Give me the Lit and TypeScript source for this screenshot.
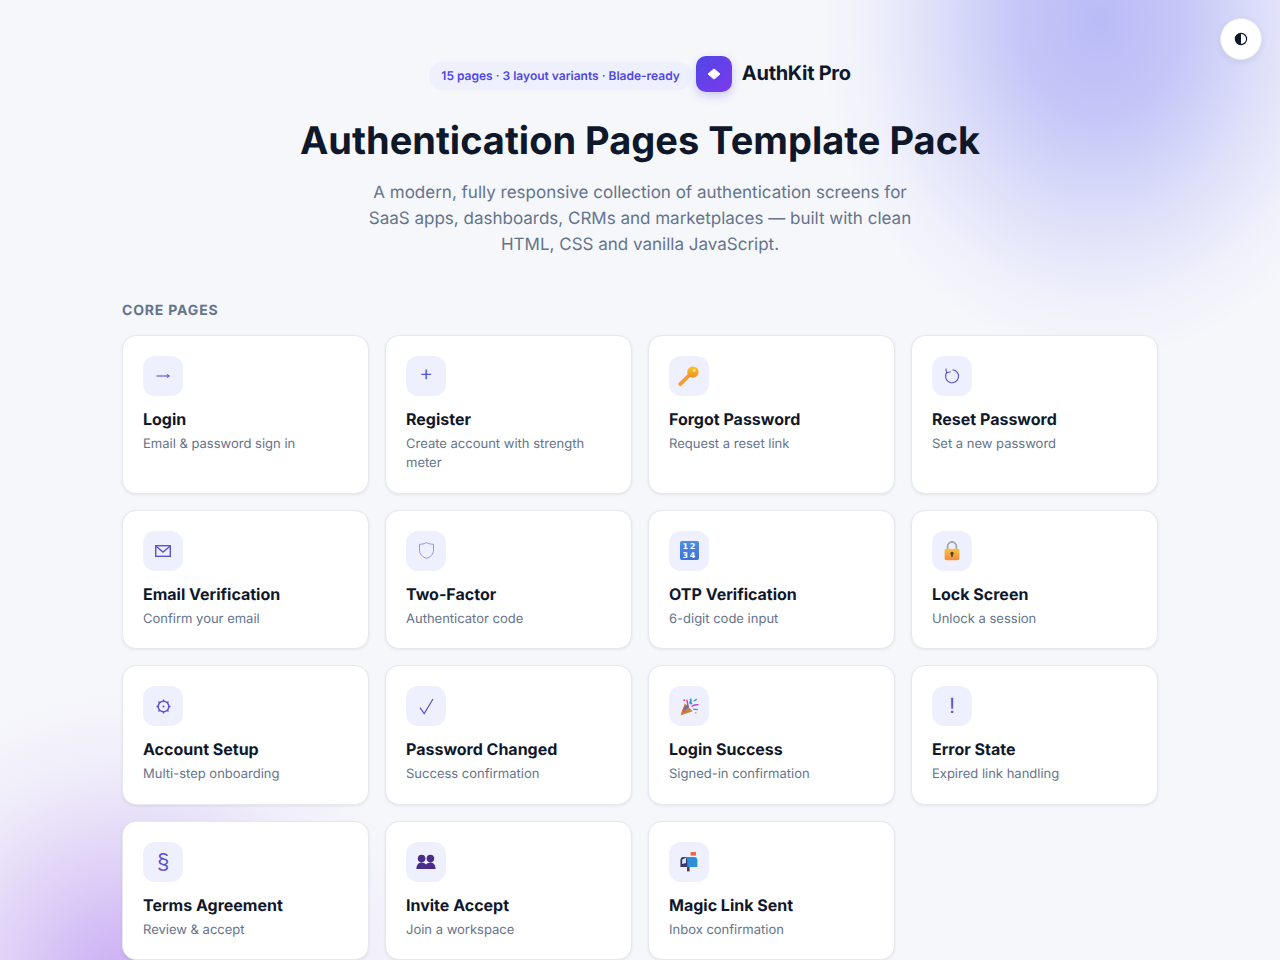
import { LitElement, html, css, svg } from "lit";
import { customElement } from "lit/decorators.js";

interface PageCard {
  icon: unknown;
  title: string;
  desc: string;
}

const arrowIcon = svg`
  <svg width="14" height="8" viewBox="0 0 14 8" fill="none" stroke="currentColor" stroke-width="1.1">
    <path d="M.5 4H13" />
    <path d="M11 2.4 13.2 4 11 5.6" />
  </svg>`;

const resetIcon = svg`
  <svg width="18" height="18" viewBox="0 0 16 16" fill="none" stroke="currentColor" stroke-width="1">
    <path d="M8.4 2.4A5.8 5.8 0 1 1 3.2 5" />
    <path d="M2.6 1.4 3.2 5.2 6.8 4.2" />
  </svg>`;

const mailIcon = svg`
  <svg width="16" height="12" viewBox="0 0 16 12" fill="none" stroke="currentColor" stroke-width="1.4">
    <rect x=".7" y=".7" width="14.6" height="10.6" />
    <path d="M1 1.2 8 7l7-5.8" />
  </svg>`;

const gearIcon = svg`
  <svg width="17" height="17" viewBox="0 0 16 16" fill="none" stroke="currentColor">
    <circle cx="8" cy="8" r="5" stroke-width="1.4" />
    <circle cx="8" cy="8" r="1" fill="currentColor" stroke="none" />
    <path d="M8 1.4V3M8 13v1.6M1.4 8H3M13 8h1.6M3.3 3.3l1.1 1.1M11.6 11.6l1.1 1.1M12.7 3.3l-1.1 1.1M4.4 11.6l-1.1 1.1"
      stroke-width="1.3" />
  </svg>`;

const checkIcon = svg`
  <svg width="15" height="17" viewBox="0 0 15 17" fill="none" stroke="currentColor" stroke-width="1.2">
    <path d="M1 9.6 5.2 15.6 14 1" />
  </svg>`;

// emoji in the design are drawn here so they don't depend on the installed emoji font
const keyIcon = svg`
  <svg width="24" height="24" viewBox="0 0 22 22">
    <defs>
      <linearGradient id="key" x1="0" y1="0" x2="0" y2="1">
        <stop offset="0" stop-color="#fcc419" /><stop offset="1" stop-color="#f08c2e" />
      </linearGradient>
    </defs>
    <path d="M3 18.5 11 10.5" stroke="#f39a32" stroke-width="3.4" stroke-linecap="round" />
    <circle cx="14.6" cy="7.4" r="5.2" fill="url(#key)" />
    <circle cx="15.8" cy="5.8" r="1.5" fill="#ffe27a" />
  </svg>`;

const shieldIcon = svg`
  <svg width="21" height="21" viewBox="0 0 18 18">
    <path d="M9 2.2c2 1.1 4 1.5 6 1.5v5c0 3.4-2.4 5.8-6 7-3.6-1.2-6-3.6-6-7v-5c2 0 4-.4 6-1.5Z"
      fill="none" stroke="#8f8cdc" stroke-width="0.8" />
  </svg>`;

const lockIcon = svg`
  <svg width="18" height="22" viewBox="0 0 18 22">
    <defs>
      <linearGradient id="lock" x1="0" y1="0" x2="0" y2="1">
        <stop offset="0" stop-color="#f9c23c" /><stop offset="1" stop-color="#f58a3c" />
      </linearGradient>
    </defs>
    <path d="M4.6 10V6.4a4.4 4.4 0 0 1 8.8 0V10" fill="none" stroke="#a3a6b5" stroke-width="1.8" />
    <rect x="1.6" y="8.8" width="14.8" height="11.4" rx="1.8" fill="url(#lock)" />
    <circle cx="9" cy="13.4" r="1.6" fill="#4a3a2c" />
    <rect x="8.3" y="13.6" width="1.4" height="3.4" fill="#4a3a2c" />
  </svg>`;

const partyIcon = svg`
  <svg width="21" height="21" viewBox="0 0 20 20">
    <path d="M1.5 18.5 5.5 7l7.5 7.5Z" fill="#c08a3e" />
    <path d="M3.6 12.5 8 7.8l2 2-5.8 5.2Z" fill="#7a6a9c" />
    <path d="M2.4 16 4 11.5l3 3.4Z" fill="#e0557d" />
    <path d="M7.5 3.5 8.5 9" stroke="#e8408c" stroke-width="1.4" />
    <path d="M10 6.5c1.6-.8 1.6-2.2 1-4" fill="none" stroke="#2e9bd6" stroke-width="1.6" />
    <circle cx="11.4" cy="7" r="1.2" fill="#2e9bd6" />
    <path d="M12 10c2-1.8 4-2 6.5-1.6" fill="none" stroke="#c145c9" stroke-width="1.4" />
    <path d="M13.5 12.5 18 13" stroke="#2e9bd6" stroke-width="1.2" />
    <path d="M14 5l3-2" stroke="#2e9bd6" stroke-width="1.3" />
    <circle cx="5" cy="4" r="0.9" fill="#e8408c" />
    <circle cx="16" cy="16" r="0.8" fill="#e8a13c" />
  </svg>`;

const peopleIcon = svg`
  <svg width="20" height="16" viewBox="0 0 20 16" fill="#4a2c8a">
    <circle cx="5.6" cy="4.6" r="3.8" />
    <circle cx="14.4" cy="4.6" r="3.8" />
    <path d="M.4 15c0-4 2-6.6 5.2-6.6 1.8 0 3.3.8 4.4 2 1.1-1.2 2.6-2 4.4-2 3.2 0 5.2 2.6 5.2 6.6Z" />
  </svg>`;

const mailboxIcon = svg`
  <svg width="20" height="22" viewBox="0 0 20 22">
    <rect x="11.6" y="1" width="5.4" height="3.6" fill="#e8674a" />
    <path d="M5 6h10a3.4 3.4 0 0 1 3.4 3.4V16H8Z" fill="#2e8fd6" />
    <path d="M1.4 9.4A3.4 3.4 0 0 1 4.8 6 3.4 3.4 0 0 1 8.2 9.4V16H1.4Z" fill="#39376e" />
    <path d="M3.2 8.4 7 6.8V12L3.2 13Z" fill="#e3e6f5" />
    <rect x="8" y="16" width="2.6" height="4.4" fill="#5a3a3a" />
  </svg>`;

const corePages: PageCard[] = [
  { icon: arrowIcon, title: "Login", desc: "Email & password sign in" },
  { icon: "+", title: "Register", desc: "Create account with strength meter" },
  { icon: keyIcon, title: "Forgot Password", desc: "Request a reset link" },
  { icon: resetIcon, title: "Reset Password", desc: "Set a new password" },
  { icon: mailIcon, title: "Email Verification", desc: "Confirm your email" },
  { icon: shieldIcon, title: "Two-Factor", desc: "Authenticator code" },
  { icon: html`<span class="num-tile"><span>12</span><span>34</span></span>`, title: "OTP Verification", desc: "6-digit code input" },
  { icon: lockIcon, title: "Lock Screen", desc: "Unlock a session" },
  { icon: gearIcon, title: "Account Setup", desc: "Multi-step onboarding" },
  { icon: checkIcon, title: "Password Changed", desc: "Success confirmation" },
  { icon: partyIcon, title: "Login Success", desc: "Signed-in confirmation" },
  { icon: html`<span class="glyph-lg">!</span>`, title: "Error State", desc: "Expired link handling" },
  { icon: html`<span class="glyph-lg">§</span>`, title: "Terms Agreement", desc: "Review & accept" },
  { icon: peopleIcon, title: "Invite Accept", desc: "Join a workspace" },
  { icon: mailboxIcon, title: "Magic Link Sent", desc: "Inbox confirmation" },
];

@customElement("app-root")
export class AppRoot extends LitElement {
  static styles = css`
    :host {
      display: block;
      position: relative;
      height: 960px;
      overflow: hidden;
      background: #f6f7fb;
      font-family: Inter, "Noto Sans", sans-serif;
      color: #0f172a;
      text-rendering: geometricPrecision;
    }

    .glow-top {
      position: absolute;
      top: -320px;
      left: 820px;
      width: 560px;
      height: 680px;
      background: radial-gradient(closest-side, rgba(99, 102, 241, 0.41) 0%, rgba(99, 102, 241, 0.33) 30%, rgba(99, 102, 241, 0.17) 58%, rgba(99, 102, 241, 0.05) 82%, rgba(99, 102, 241, 0) 100%);
    }

    .glow-bottom {
      position: absolute;
      top: 690px;
      left: -170px;
      width: 600px;
      height: 600px;
      background: radial-gradient(closest-side, rgba(147, 82, 235, 0.45) 0%, rgba(147, 82, 235, 0.4) 13%, rgba(147, 82, 235, 0.21) 45%, rgba(147, 82, 235, 0.06) 75%, rgba(147, 82, 235, 0) 100%);
    }

    .theme-toggle {
      position: absolute;
      top: 18px;
      right: 18px;
      width: 42px;
      height: 42px;
      border-radius: 50%;
      background: #fff;
      border: 1px solid #e6e8f0;
      box-shadow: 0 2px 6px rgba(15, 23, 42, 0.08);
      display: flex;
      align-items: center;
      justify-content: center;
      box-sizing: border-box;
    }

    .wrap {
      position: relative;
      max-width: 1100px;
      margin: 0 auto;
      padding: 56px 32px 0;
      box-sizing: border-box;
    }

    .hero {
      text-align: center;
      margin-bottom: 43.9px;
    }

    .hero-top {
      display: flex;
      justify-content: center;
      align-items: center;
      gap: 4px;
      margin-bottom: 25px;
    }

    .badge {
      margin-top: 4px;
      padding: 0 12px;
      height: 28px;
      line-height: 28px;
      border-radius: 14px;
      background: #eef1fd;
      color: #4f46e5;
      font-size: 12px;
      font-weight: 600;
    }

    .brand {
      display: flex;
      align-items: center;
      gap: 10px;
      font-size: 20px;
      font-weight: 700;
      letter-spacing: -0.015em;
    }

    .brand-name {
      padding-bottom: 2px;
    }

    .brand-mark {
      width: 36px;
      height: 36px;
      border-radius: 10px;
      background: linear-gradient(135deg, #4f46e5, #7c3aed);
      box-shadow: 0 4px 10px rgba(79, 70, 229, 0.25);
      display: flex;
      align-items: center;
      justify-content: center;
    }

    h1 {
      margin: 0 0 15px;
      font-size: 38px;
      line-height: 48px;
      font-weight: 700;
      color: #0f172a;
    }

    .lead {
      margin: 0 auto;
      max-width: 560px;
      font-size: 17px;
      line-height: 26px;
      color: #64748b;
    }

    .section-label {
      margin: 0 0 16px;
      font-size: 14px;
      line-height: 17px;
      font-weight: 700;
      letter-spacing: 0.06em;
      text-transform: uppercase;
      color: #64748b;
    }

    .grid {
      display: grid;
      grid-template-columns: repeat(4, 1fr);
      gap: 16px;
    }

    .card {
      background: #fff;
      border: 1px solid #e6e8f0;
      border-radius: 14px;
      padding: 20px 20px 19px;
      box-shadow: 0 1px 3px rgba(15, 23, 42, 0.08);
    }

    .icon {
      width: 40px;
      height: 40px;
      border-radius: 12px;
      background: #eef1fd;
      color: #5a52cf;
      font-family: "Liberation Sans", "DejaVu Sans", sans-serif;
      font-size: 20px;
      display: flex;
      align-items: center;
      justify-content: center;
      margin-bottom: 12px;
    }

    .glyph-lg {
      font-size: 22px;
    }

    .num-tile {
      width: 19px;
      height: 19px;
      padding-left: 1.5px;
      box-sizing: border-box;
      border-radius: 2px;
      background: linear-gradient(#4d8fe8, #3f6fd8);
      color: #fff;
      font-family: "DejaVu Sans", sans-serif;
      font-size: 8px;
      line-height: 9px;
      font-weight: 700;
      letter-spacing: 1.6px;
      display: flex;
      flex-direction: column;
      align-items: center;
      justify-content: center;
    }

    .title {
      font-size: 16px;
      line-height: 22px;
      font-weight: 700;
      color: #0f172a;
      margin-bottom: 5px;
    }

    .desc {
      font-size: 13px;
      line-height: 19.5px;
      color: #64748b;
    }
  `;

  render() {
    return html`
      <div class="glow-top"></div>
      <div class="glow-bottom"></div>
      <div class="theme-toggle">
        <svg width="14" height="14" viewBox="0 0 14 14">
          <circle cx="7" cy="7" r="5.6" fill="#fff" stroke="#0f172a" stroke-width="1.2" />
          <path d="M7 1.4a5.6 5.6 0 0 0 0 11.2Z" fill="#0f172a" />
        </svg>
      </div>
      <div class="wrap">
        <header class="hero">
          <div class="hero-top">
            <span class="badge">15 pages · 3 layout variants · Blade-ready</span>
            <div class="brand">
              <span class="brand-mark">
                <svg width="16" height="16" viewBox="0 0 16 16">
                  <path d="M8 2.9 14 8 8 13.1 2 8Z" fill="#fff" stroke="#fff" stroke-linejoin="round" />
                </svg>
              </span>
              <span class="brand-name">AuthKit Pro</span>
            </div>
          </div>
          <h1>Authentication Pages Template Pack</h1>
          <p class="lead">
            A modern, fully responsive collection of authentication screens for SaaS apps, dashboards, CRMs and
            marketplaces — built with clean HTML, CSS and vanilla JavaScript.
          </p>
        </header>
        <h2 class="section-label">Core Pages</h2>
        <div class="grid">
          ${corePages.map(
            (page) => html`
              <div class="card">
                <div class="icon">${page.icon}</div>
                <div class="title">${page.title}</div>
                <div class="desc">${page.desc}</div>
              </div>
            `
          )}
        </div>
      </div>
    `;
  }
}
